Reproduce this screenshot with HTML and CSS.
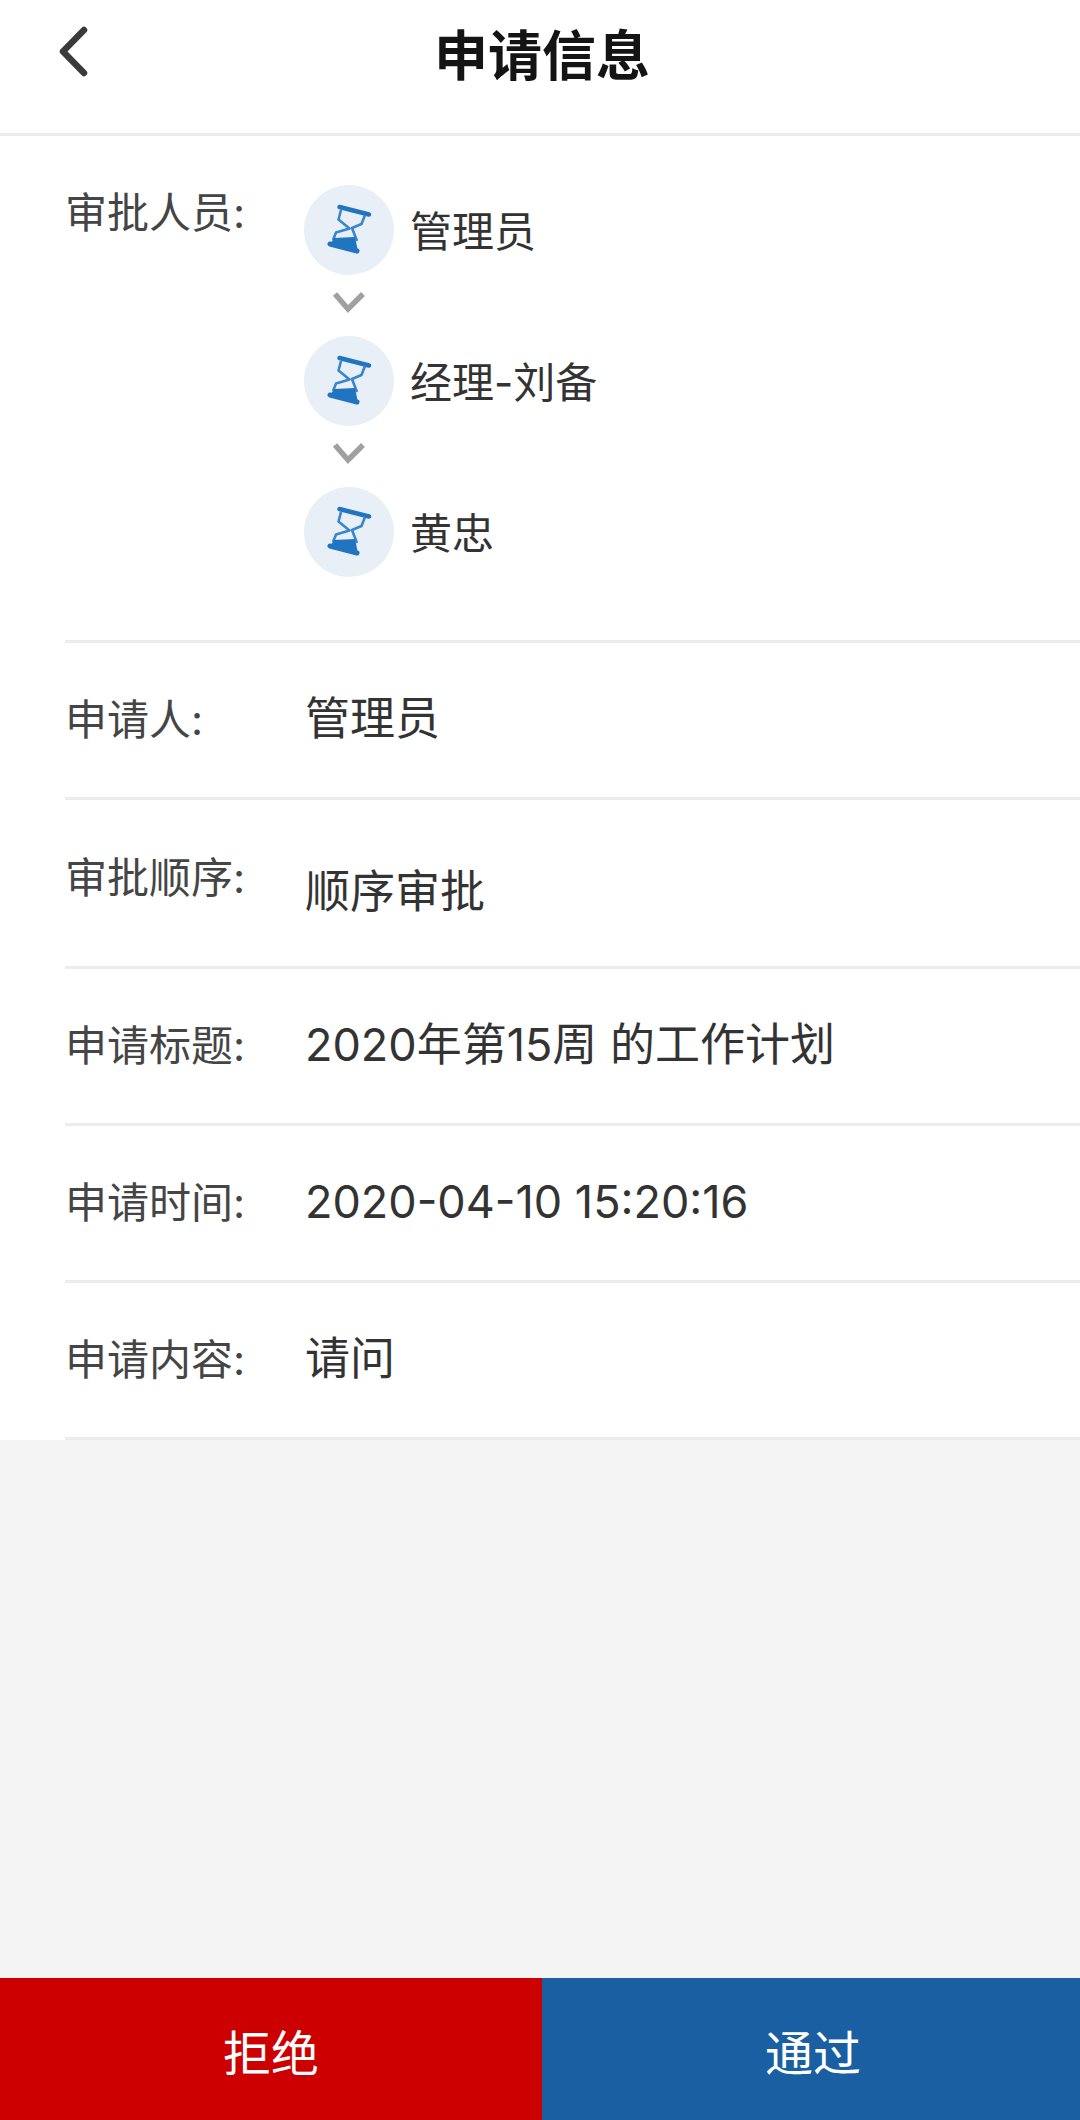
FILE: index.html
```html
<!DOCTYPE html>
<html lang="zh-CN">
<head>
    <meta charset="UTF-8">
    <meta name="viewport" content="width=device-width, initial-scale=1.0">
    <title>申请信息</title>
    <link rel="stylesheet" href="styles.css">
</head>
<body>
    <div class="page">
        <header class="top-bar">
            <svg class="back-icon" viewBox="0 0 40 60" width="40" height="60">
                <path d="M30 8 L9 29.5 L30 51"/>
            </svg>
            <h1>申请信息</h1>
        </header>

        <div class="info-list">
            <div class="info-row approver-row">
                <div class="label">审批人员:</div>
                <div class="approvers">
                    <div class="approver">
                        <svg class="avatar" viewBox="0 0 90 90" width="90" height="90"><use href="#hourglass"/></svg>
                        <span>管理员</span>
                    </div>
                    <svg class="down-icon" viewBox="0 0 90 61" width="90" height="61"><path d="M31 19 L44 34 L59 19"/></svg>
                    <div class="approver">
                        <svg class="avatar" viewBox="0 0 90 90" width="90" height="90"><use href="#hourglass"/></svg>
                        <span>经理-刘备</span>
                    </div>
                    <svg class="down-icon" viewBox="0 0 90 61" width="90" height="61"><path d="M31 19 L44 34 L59 19"/></svg>
                    <div class="approver">
                        <svg class="avatar" viewBox="0 0 90 90" width="90" height="90"><use href="#hourglass"/></svg>
                        <span>黄忠</span>
                    </div>
                </div>
            </div>
            <div class="info-row">
                <div class="label">申请人:</div>
                <div class="value">管理员</div>
            </div>
            <div class="info-row order-row">
                <div class="label">审批顺序:</div>
                <div class="value">顺序审批</div>
            </div>
            <div class="info-row">
                <div class="label">申请标题:</div>
                <div class="value">2020年第15周 的工作计划</div>
            </div>
            <div class="info-row">
                <div class="label">申请时间:</div>
                <div class="value">2020-04-10 15:20:16</div>
            </div>
            <div class="info-row">
                <div class="label">申请内容:</div>
                <div class="value">请问</div>
            </div>
        </div>

        <div class="actions">
            <button class="btn btn-reject">拒绝</button>
            <button class="btn btn-pass">通过</button>
        </div>
    </div>

    <svg class="defs" width="0" height="0">
        <defs>
            <g id="hourglass">
                <circle cx="45" cy="45" r="45" fill="#e8eff6"/>
                <path d="M35.5 22 L65 29.5" fill="none" stroke="#2174c0" stroke-width="4.5" stroke-linecap="round"/>
                <path d="M37 25 L34.5 34.5 L45.5 43.5 L32 47.5 L29 55 M61 30 L57.5 39 L48 43 L53 56" fill="none" stroke="#3a86cc" stroke-width="2.6" stroke-linejoin="round"/>
                <path d="M30 53 L51 52 L53.5 64 L27 58 Z" fill="#2174c0"/>
                <path d="M26 59 L53 66" fill="none" stroke="#2174c0" stroke-width="5" stroke-linecap="round"/>
            </g>
        </defs>
    </svg>
</body>
</html>
```

FILE: styles.css
```css
* {
    box-sizing: border-box;
}
body {
    margin: 0;
    font-family: Inter, "Noto Sans CJK SC", sans-serif;
    background: #f4f4f4;
}
.page {
    display: flex;
    flex-direction: column;
    width: 1080px;
    height: 2120px;
}
.defs {
    position: absolute;
}

.top-bar {
    position: relative;
    flex: none;
    display: flex;
    justify-content: center;
    align-items: center;
    height: 136px;
    padding-bottom: 20px;
    background: #fff;
    border-bottom: 3px solid #ececec;
}
.top-bar h1 {
    margin: 0 0 0 4px;
    font-size: 54px;
    font-weight: 700;
    line-height: 70px;
    color: #141414;
}
.back-icon {
    position: absolute;
    left: 54px;
    top: 22px;
}
.back-icon path {
    fill: none;
    stroke: #3a3a3a;
    stroke-width: 6.5;
    stroke-linecap: round;
    stroke-linejoin: round;
}

.info-list {
    flex: none;
    height: 1304px;
    padding-left: 65px;
    background: #fff;
}
.info-row {
    display: flex;
    align-items: center;
    height: 157px;
    border-bottom: 3px solid #ececec;
}
.label {
    flex: none;
    width: 240px;
    font-size: 42px;
    line-height: 60px;
    color: #454545;
}
.value {
    font-size: 45px;
    line-height: 60px;
    color: #333;
}
.info-row .value {
    margin-bottom: 3px;
}
.info-row.order-row {
    height: 169px;
}
.order-row .label {
    margin-bottom: 10px;
}
.info-row.order-row .value {
    margin-top: 17px;
    margin-bottom: 0;
}

.info-row.approver-row {
    align-items: flex-start;
    height: 507px;
    padding-top: 49px;
}
.approver-row .label {
    margin-top: -2px;
}
.approvers {
    display: flex;
    flex-direction: column;
    margin-left: -1px;
}
.approver {
    display: flex;
    align-items: center;
    gap: 16px;
    height: 90px;
    padding-bottom: 4px;
    font-size: 42px;
    color: #333;
}
.avatar {
    flex: none;
    margin-top: 4px;
}
.down-icon {
    display: block;
}
.down-icon path {
    fill: none;
    stroke: #a0a0a0;
    stroke-width: 5.5;
}

.actions {
    flex: none;
    display: flex;
    height: 142px;
    margin-top: auto;
}
.btn {
    padding: 2px 0 0;
    border: none;
    font-family: inherit;
    font-size: 48px;
    color: #fff;
}
.btn-reject {
    width: 542px;
    background: #cc0000;
}
.btn-pass {
    width: 538px;
    padding-left: 4px;
    background: #1a5fa2;
}
```
